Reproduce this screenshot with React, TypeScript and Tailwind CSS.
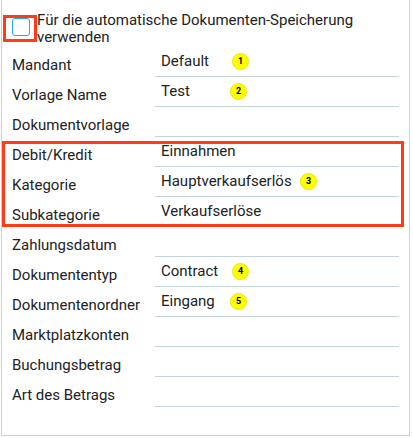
import type { ReactNode } from 'react'

interface Row {
  label: string
  value?: string
  badge?: { n: number; left: string }
}

const top: Row[] = [
  { label: 'Mandant', value: 'Default', badge: { n: 1, left: 'left-[77px]' } },
  { label: 'Vorlage Name', value: 'Test', badge: { n: 2, left: 'left-[75px]' } },
  { label: 'Dokumentvorlage' },
]

const marked: Row[] = [
  { label: 'Debit/Kredit', value: 'Einnahmen' },
  { label: 'Kategorie', value: 'Hauptverkaufserlös', badge: { n: 3, left: 'left-[145px]' } },
  { label: 'Subkategorie', value: 'Verkaufserlöse' },
]

const rest: Row[] = [
  { label: 'Zahlungsdatum' },
  { label: 'Dokumententyp', value: 'Contract', badge: { n: 4, left: 'left-[77px]' } },
  { label: 'Dokumentenordner', value: 'Eingang', badge: { n: 5, left: 'left-[75px]' } },
  { label: 'Marktplatzkonten' },
  { label: 'Buchungsbetrag' },
  { label: 'Art des Betrags' },
]

function Badge({ n, left }: { n: number; left: string }) {
  return (
    <span className={`absolute top-[6px] ${left} w-[17px] h-[17px] rounded-full bg-[#ffff00] border border-[#e8e800] flex items-center justify-center text-[9px] font-bold text-black leading-none`}>
      {n}
    </span>
  )
}

function FormRow({ row }: { row: Row }) {
  return (
    <div className="flex h-[30px]">
      <div className="w-[153px] pl-[10px] pt-[9px] leading-[18px] text-[#222]">{row.label}</div>
      <div className="relative w-[244px] border-b border-[#c5d5dc] pl-[6px] pt-[5px] leading-[18px] text-[#222]">
        {row.value}
        {row.badge && <Badge {...row.badge} />}
      </div>
    </div>
  )
}

function Mark({ className, children }: { className: string; children?: ReactNode }) {
  return <div className={`absolute border-[3px] border-[#ff3b1a] pointer-events-none ${className}`}>{children}</div>
}

export default function App() {
  return (
    <div className="w-[413px] h-[438px] bg-white text-[15px]" style={{ fontFamily: 'Roboto, "Liberation Sans", sans-serif' }}>
      <div className="ml-[1px] w-[409px] h-[436px] border-l border-r border-b border-[#c5d5dc]">
        <div className="relative h-[47px] flex items-start">
          <div className="mt-[18px] ml-[10px] w-[18px] h-[18px] shrink-0 rounded-[3px] border border-[#29a8e6] bg-white" />
          <div className="ml-[7px] mt-[12px] w-[360px] leading-[17px] text-[#222]">
            Für die automatische Dokumenten-Speicherung verwenden
          </div>
          <Mark className="left-[1px] top-[15px] w-[34px] h-[27px]" />
        </div>
        {top.map(r => <FormRow key={r.label} row={r} />)}
        <div className="relative">
          {marked.map(r => <FormRow key={r.label} row={r} />)}
          <Mark className="left-0 top-[4px] right-[5px] bottom-0" />
        </div>
        {rest.map(r => <FormRow key={r.label} row={r} />)}
      </div>
    </div>
  )
}
